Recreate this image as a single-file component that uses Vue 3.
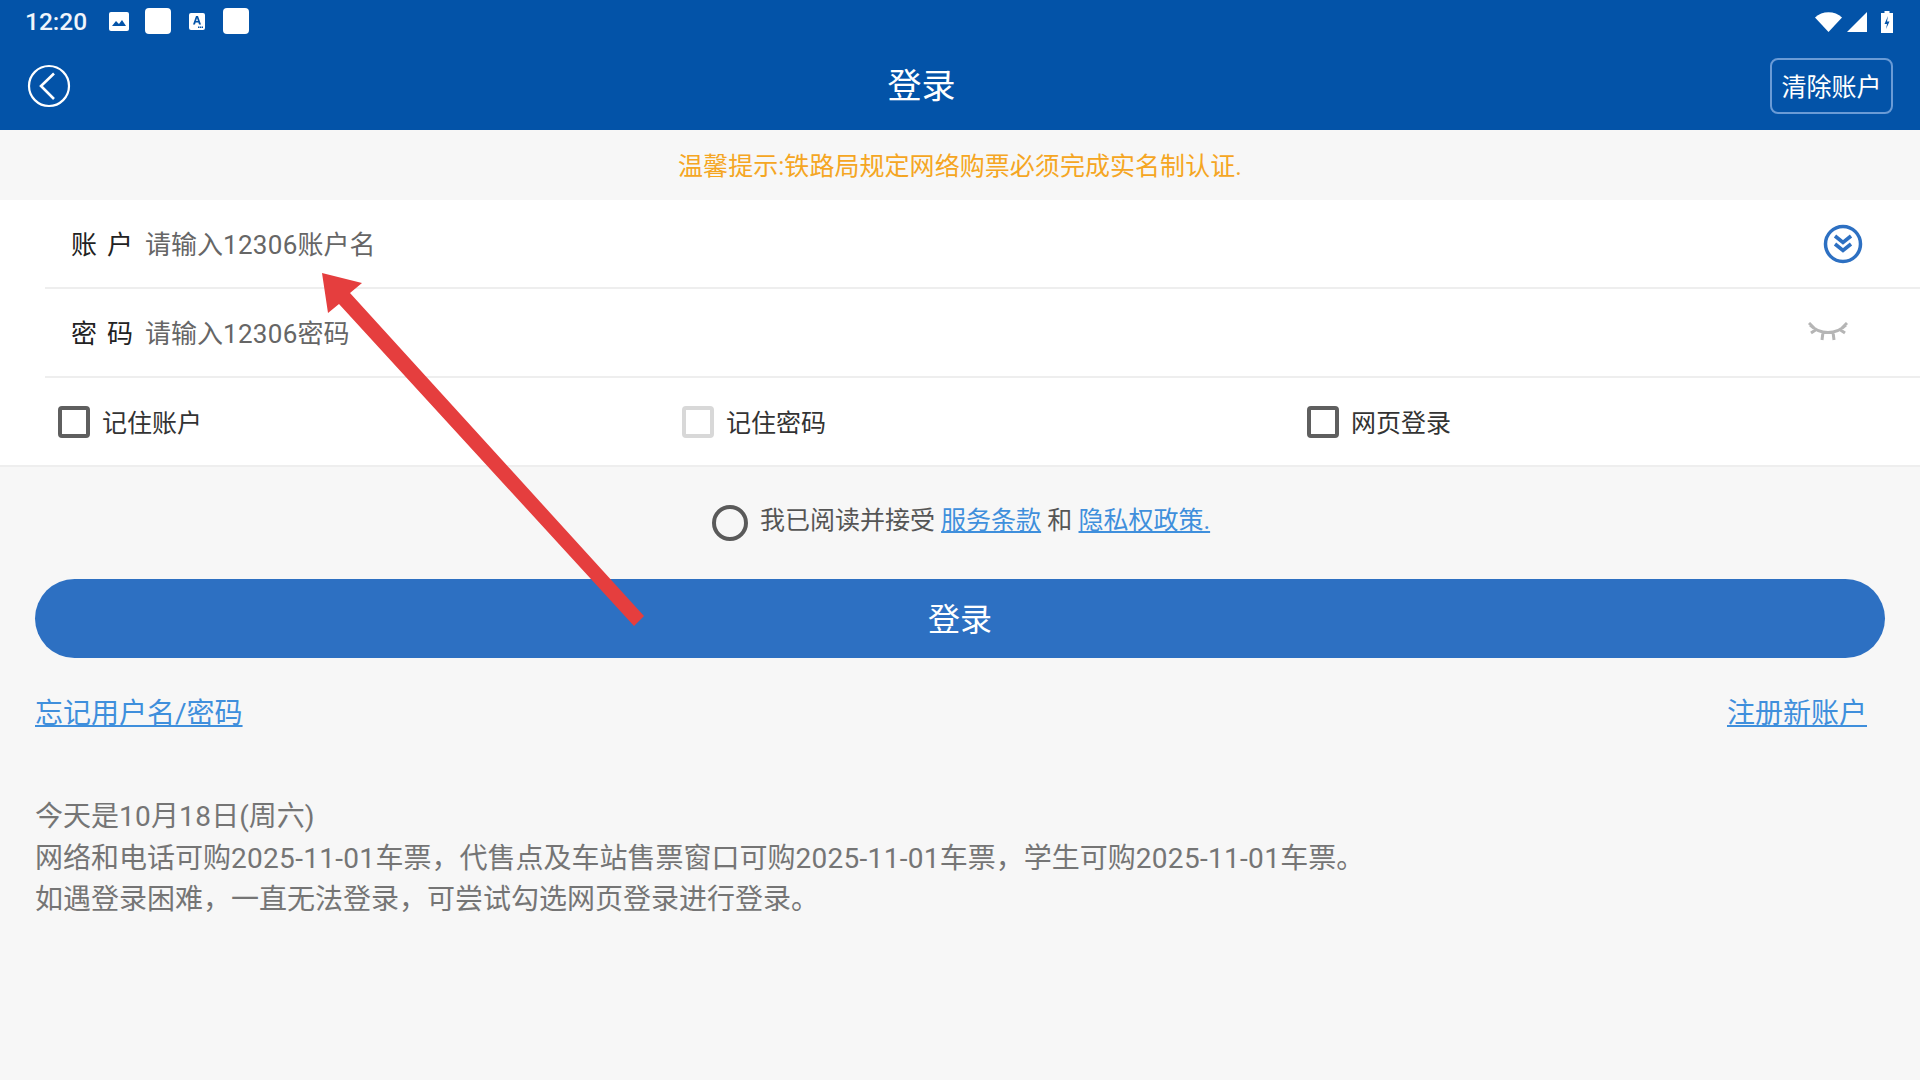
<script setup>
const rows = [
  { label: ['账', '户'], ph: '请输入', num: '12306', rest: '账户名' },
  { label: ['密', '码'], ph: '请输入', num: '12306', rest: '密码' },
]
const checks = [
  { text: '记住账户', off: false },
  { text: '记住密码', off: true },
  { text: '网页登录', off: false },
]
</script>

<template>
  <div class="page">
    <header class="head">
      <div class="status">
        <span class="time">12:20</span>
        <svg class="s-img" viewBox="0 0 20 19"><rect width="20" height="19" rx="2" fill="#fff"/><path d="M3 14l4-5 3 3 3-4 4 6z" fill="#0353a8"/></svg>
        <span class="sq"></span>
        <svg class="s-a" viewBox="0 0 16 17"><rect width="16" height="17" rx="2" fill="#fff"/><path d="M4 11.500L7 3h2l3 8.500h-2l-.6-2H6.600L6 11.500zM7.100 8h1.800L8 5z" fill="#0353a8"/><path d="M9 13.500h1.500V15H9zM11 13.500h1.500V15H11zM13 13.500h1V15h-1z" fill="#0353a8"/></svg>
        <span class="sq"></span>
        <span class="grow"></span>
        <svg class="s-wifi" viewBox="0 0 27 20"><path d="M0 5.500C7-1.500 20-1.500 27 5.500L13.500 20z" fill="#fff"/></svg>
        <svg class="s-sig" viewBox="0 0 20 20"><path d="M20 0v20H0z" fill="#fff"/></svg>
        <svg class="s-bat" viewBox="0 0 12 22"><path d="M3.500 0h5v2H12v20H0V2h3.500z" fill="#fff"/><path d="M7 5L3.500 13H6l-1 5 3.500-7.500H6z" fill="#0353a8"/></svg>
      </div>
      <div class="bar">
        <svg class="back" viewBox="0 0 44 44"><circle cx="22" cy="22" r="20" fill="none" stroke="#fff" stroke-width="2.200"/><path d="M27 9.500L14 22l13 13" fill="none" stroke="#fff" stroke-width="2.600"/></svg>
        <div class="title">登录</div>
        <div class="clear"><span>清除账户</span></div>
      </div>
    </header>

    <div class="notice"><span>温馨提示:铁路局规定网络购票必须完成实名制认证.</span></div>

    <section class="form">
      <div v-for="(r, i) in rows" :key="r.rest" class="row">
        <span class="label"><span>{{ r.label[0] }}</span><span>{{ r.label[1] }}</span></span>
        <span class="ph">{{ r.ph }}<span class="num">{{ r.num }}</span>{{ r.rest }}</span>
        <span class="grow"></span>
        <svg v-if="i === 0" class="chev" viewBox="0 0 40 40"><circle cx="20" cy="20" r="17.500" fill="none" stroke="#2d70c2" stroke-width="3.500"/><path d="M12 12l8 6.500 8-6.500M12 20l8 6.500 8-6.500" fill="none" stroke="#2d70c2" stroke-width="3.600"/></svg>
        <svg v-else class="eye" viewBox="0 0 40 20"><path d="M2 3c10 10 26 10 36 0M1 1l6 6M39 1l-6 6M3 11l6-4M37 11l-6-4M14 18l1-8M26 18l-1-8" fill="none" stroke="#b5b5b5" stroke-width="3"/></svg>
      </div>
      <div class="checks">
        <label v-for="c in checks" :key="c.text" class="check">
          <span class="box" :class="{ off: c.off }"></span>
          <span class="check-text">{{ c.text }}</span>
        </label>
      </div>
    </section>

    <div class="agree">
      <span class="radio"></span>
      <span class="agree-text">我已阅读并接受 <a>服务条款</a> 和 <a>隐私权政策.</a></span>
    </div>

    <button class="login"><span>登录</span></button>

    <div class="links">
      <a>忘记用户名/密码</a>
      <a>注册新账户</a>
    </div>

    <div class="info">
      <p>今天是<span class="num">10</span>月<span class="num">18</span>日(周六)</p>
      <p>网络和电话可购<span class="num">2025-11-01</span>车票，代售点及车站售票窗口可购<span class="num">2025-11-01</span>车票，学生可购<span class="num">2025-11-01</span>车票。</p>
      <p>如遇登录困难，一直无法登录，可尝试勾选网页登录进行登录。</p>
    </div>

    <svg class="arrow" width="1920" height="1080" viewBox="0 0 1920 1080"><path d="M322 273L362 283L350 293L644 616L634 626L339 304L328 313Z" fill="#e53e3e"/></svg>
  </div>
</template>

<style>
html, body { margin: 0; padding: 0; overflow: hidden; }
</style>

<style scoped>
.page {
  position: relative;
  width: 1920px;
  height: 1080px;
  overflow: hidden;
  background: #f7f7f7;
  font-family: Roboto, "Noto Sans CJK SC", sans-serif;
  color: #222;
}
.grow { flex: 1; }
.num { letter-spacing: 0.3px; }
.head { background: #0353a8; height: 130px; display: flex; flex-direction: column; }
.status { height: 43px; display: flex; align-items: center; padding: 0 27px 0 26px; color: #fff; }
.time { font-size: 24.500px; font-weight: 500; width: 83px; color: #f0f5fb; margin-left: -1px; margin-right: 1px; }
.s-img { width: 20px; height: 19px; margin-right: 16px; margin-top: -1px; }
.sq { width: 26px; height: 26px; background: #fff; border-radius: 4px; margin-right: 18px; margin-top: -1px; }
.s-a { width: 16px; height: 17px; margin-right: 18px; }
.s-wifi { width: 27px; height: 20px; margin-right: 5px; }
.s-sig { width: 20px; height: 20px; margin-right: 14px; }
.s-bat { width: 12px; height: 22px; }
.bar { flex: 1; display: flex; align-items: center; padding: 0 27px 2px 27px; color: #fff; }
.back { width: 44px; height: 44px; }
.title { flex: 1; text-align: center; font-size: 34px; padding-left: 2px; line-height: 44px; }
.clear {
  box-sizing: border-box;
  width: 123px;
  height: 56px;
  border: 2px solid #6a9bd6;
  border-radius: 8px;
  font-size: 25px;
  display: flex;
  align-items: center;
  justify-content: center;
  padding-bottom: 2px;
}
.notice { height: 70px; display: flex; align-items: center; justify-content: center; color: #f5a623; font-size: 25px; letter-spacing: 0.05px; padding-bottom: 2px; box-sizing: border-box; }
.form { background: #fff; height: 267px; box-sizing: border-box; border-bottom: 2px solid #eeeeee; }
.row {
  box-sizing: border-box;
  height: 89px;
  margin-left: 45px;
  padding: 0 27px 2px 26px;
  border-bottom: 2px solid #eeeeee;
  display: flex;
  align-items: center;
}
.label { width: 74px; display: flex; gap: 10px; font-size: 26px; color: #222; }
.ph { font-size: 26px; color: #666; }
.chev { width: 40px; height: 40px; margin-right: 30px; margin-top: 2px; }
.eye { width: 40px; height: 20px; margin-right: 45px; margin-top: 1px; }
.checks { display: grid; grid-template-columns: repeat(3, 625px); padding-left: 58px; height: 87px; align-items: center; }
.check { display: flex; align-items: center; gap: 12px; font-size: 25px; color: #333; }
.check-text { margin-top: -2px; }
.box { box-sizing: border-box; width: 32px; height: 32px; border: 4px solid #5f5f5f; border-radius: 4px; }
.check:nth-child(2), .check:nth-child(3) { margin-left: -1px; }
.box.off { border-color: #d8d8d8; }
.agree { height: 112px; box-sizing: border-box; padding-bottom: 11px; display: flex; align-items: center; justify-content: center; gap: 12px; }
.radio { box-sizing: border-box; width: 36px; height: 36px; border: 4px solid #5a5a5a; border-radius: 50%; margin-top: 11px; margin-left: 2px; }
.agree-text { font-size: 25px; color: #555; }
a { color: #3f8fdc; text-decoration: underline; }
.login {
  display: block;
  box-sizing: border-box;
  width: 1850px;
  height: 79px;
  margin-left: 35px;
  padding: 0 0 3px;
  border: 0;
  border-radius: 40px;
  background: #2d70c2;
  color: #fff;
  font: inherit;
  font-size: 32px;
}
.links { display: flex; justify-content: space-between; padding: 0 53px 0 35px; margin-top: 35px; font-size: 28px; line-height: 42px; }
.info { margin: 61px 0 0 35px; font-size: 28px; line-height: 41.500px; color: #757575; }
.info p { margin: 0; }
.arrow { position: absolute; left: 0; top: 0; pointer-events: none; }
</style>
